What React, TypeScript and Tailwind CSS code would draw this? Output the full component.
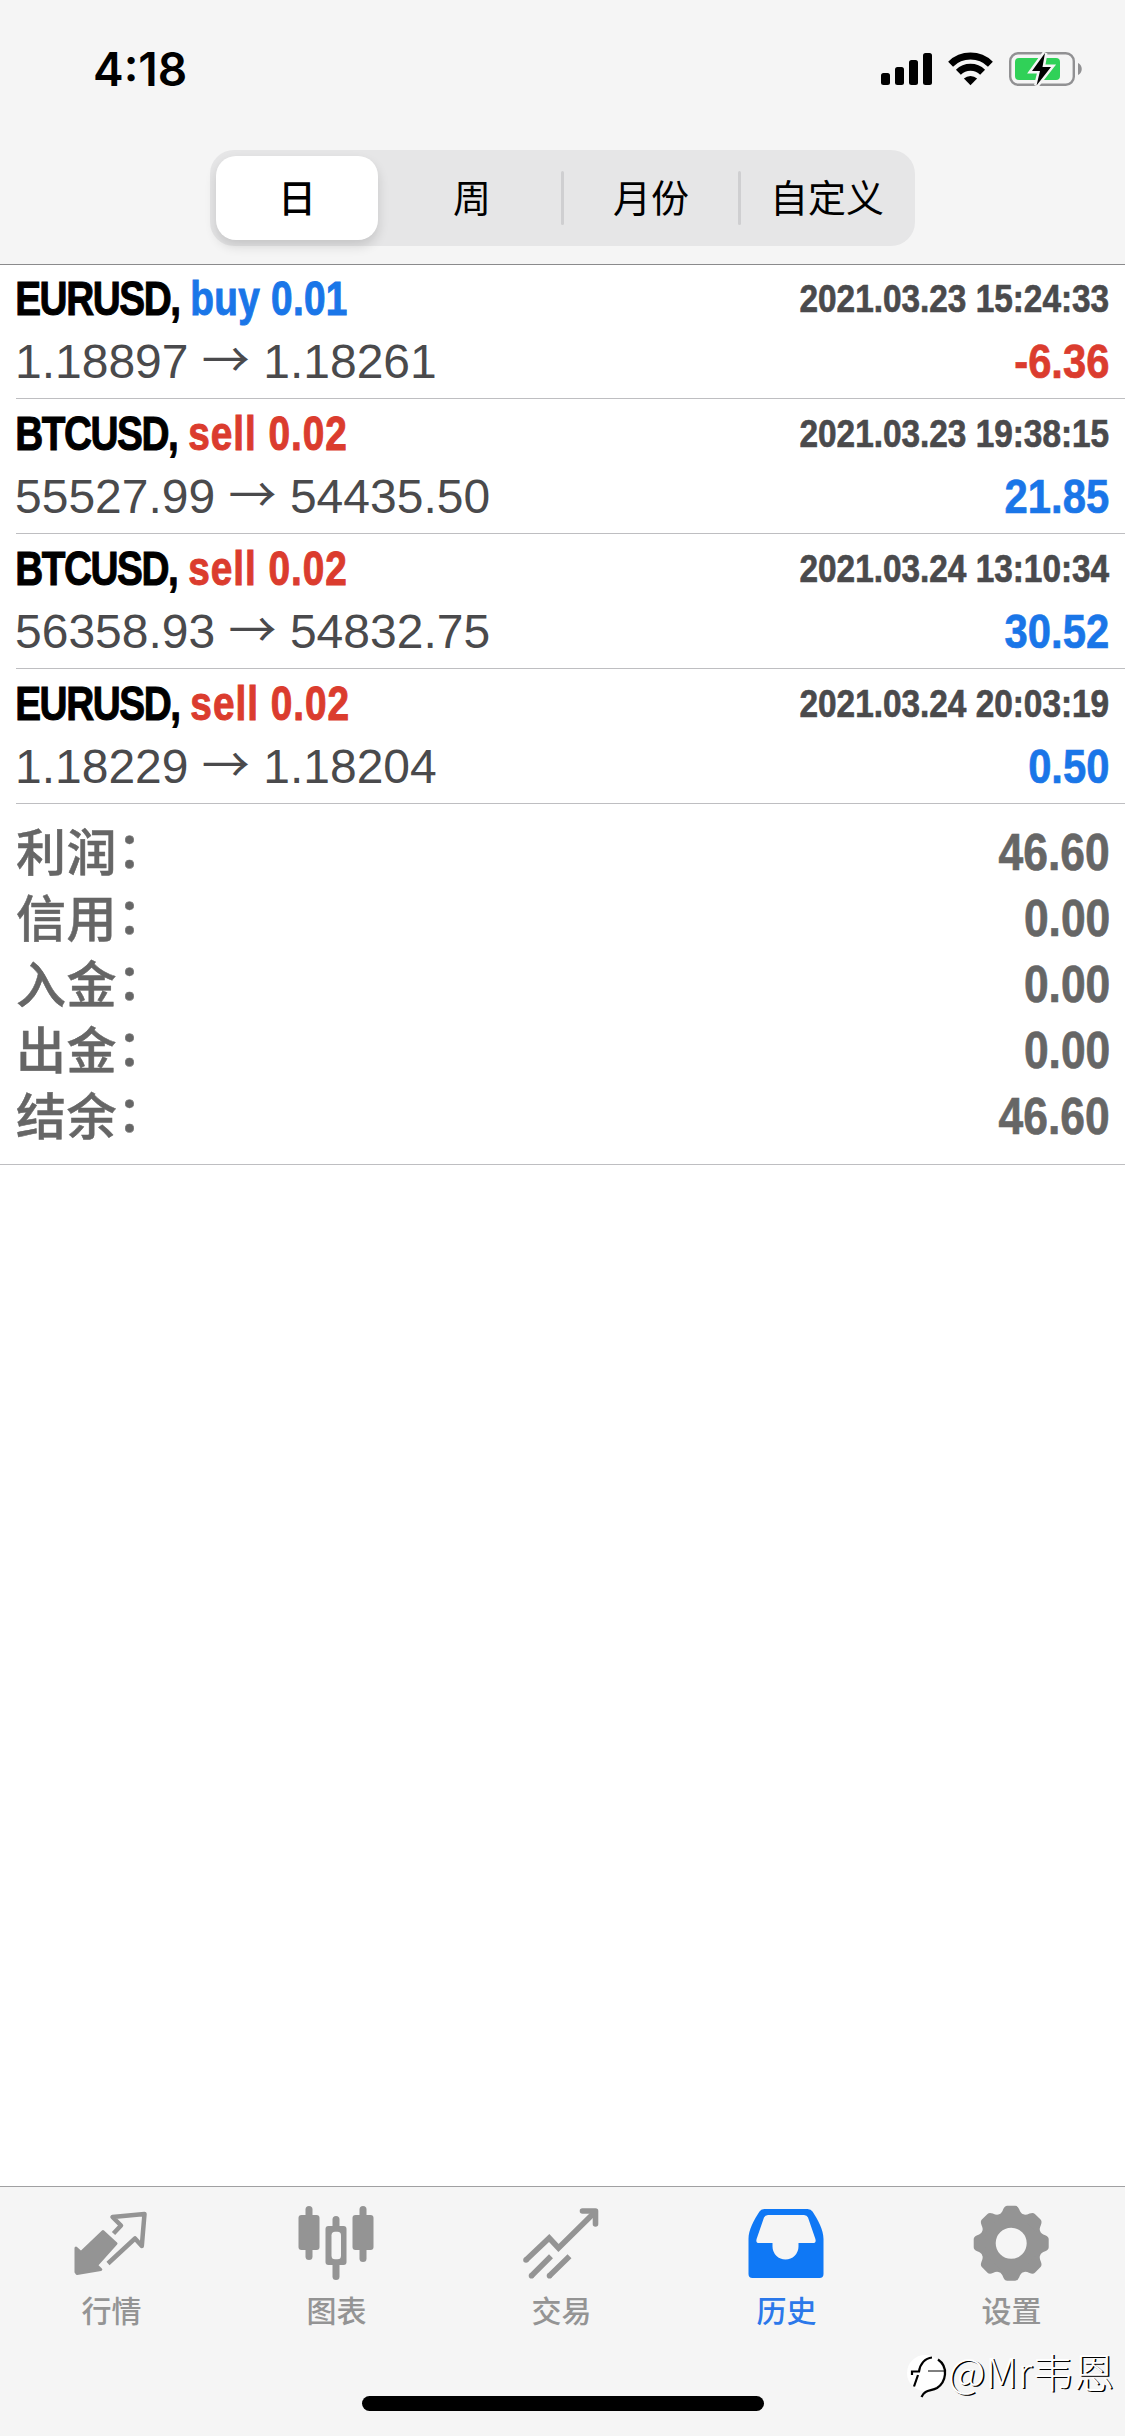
import React from 'react';

type Deal = {
  symbol: string;
  side: 'buy' | 'sell';
  lots: string;
  open: string;
  close: string;
  time: string;
  profit: string;
};

const deals: Deal[] = [
  { symbol: 'EURUSD', side: 'buy', lots: '0.01', open: '1.18897', close: '1.18261', time: '2021.03.23 15:24:33', profit: '-6.36' },
  { symbol: 'BTCUSD', side: 'sell', lots: '0.02', open: '55527.99', close: '54435.50', time: '2021.03.23 19:38:15', profit: '21.85' },
  { symbol: 'BTCUSD', side: 'sell', lots: '0.02', open: '56358.93', close: '54832.75', time: '2021.03.24 13:10:34', profit: '30.52' },
  { symbol: 'EURUSD', side: 'sell', lots: '0.02', open: '1.18229', close: '1.18204', time: '2021.03.24 20:03:19', profit: '0.50' },
];

const totals = [
  { label: '利润', value: '46.60' },
  { label: '信用', value: '0.00' },
  { label: '入金', value: '0.00' },
  { label: '出金', value: '0.00' },
  { label: '结余', value: '46.60' },
];

const periods = [
  { name: '日', width: 'w-[162px]' },
  { name: '周', width: 'ml-[5px] w-[178px]' },
  { name: '月份', width: 'w-[174px]' },
  { name: '自定义', width: 'w-[172px]' },
];

const sideStyles = {
  buy: 'tracking-[0.3px] text-[#1a76e8]',
  sell: 'tracking-[1.2px] text-[#db3c2e]',
};

const StatusBar = () => (
  <div className="flex h-[138px] items-center justify-between pl-[93px] pr-[42px]">
    <span className="font-['Inter'] text-[46px] leading-none font-semibold text-black">4:18</span>
    <div className="flex items-center gap-4">
      <svg width="51" height="34" viewBox="0 0 51 34" fill="#000">
        <rect x="0" y="21" width="9" height="12" rx="2.5" />
        <rect x="14" y="15" width="9" height="18" rx="2.5" />
        <rect x="28" y="8" width="9" height="25" rx="2.5" />
        <rect x="42" y="1" width="9" height="32" rx="2.5" />
      </svg>
      <svg width="45" height="34" viewBox="0 0 45 34" fill="none" stroke="#000" strokeWidth="7">
        <path d="M2.6 12.2a28.5 28.5 0 0 1 39.8 0" />
        <path d="M10.4 20.2a17.3 17.3 0 0 1 24.2 0" />
        <path d="M22.5 33.2l-6.6-6.6a9.4 9.4 0 0 1 13.2 0z" fill="#000" stroke="none" />
      </svg>
      <svg width="74" height="34" viewBox="0 0 74 34">
        <rect x="1.2" y="1.2" width="63.6" height="31.6" rx="8" fill="none" stroke="#919193" strokeWidth="2.4" />
        <path d="M69 11c5 2 5 10 0 12z" fill="#919193" />
        <rect x="6" y="6" width="45" height="22" rx="4" fill="#30d158" />
        <path d="M36 1 23 19H31L27.500 33.500 42 15H33.500z" fill="#000" stroke="#f5f5f5" strokeWidth="5" paintOrder="stroke" />
      </svg>
    </div>
  </div>
);

const PeriodSwitch = () => (
  <div className="mt-3 ml-[210px] flex h-[96px] w-[705px] items-center rounded-[24px] bg-[#e6e6e7] py-[6px] pl-[6px]">
    {periods.map(({ name, width }, i) => (
      <React.Fragment key={name}>
        {i > 1 && <span className="h-[54px] w-[3px] shrink-0 rounded-full bg-[#cfcfd1]" />}
        <button
          className={`flex h-full shrink-0 items-center justify-center pt-[2px] text-[38px] leading-none text-black ${width} ${
            i === 0 ? 'rounded-[20px] bg-white font-medium shadow-[0_6px_12px_rgba(0,0,0,0.14)]' : ''
          }`}
        >
          {name}
        </button>
      </React.Fragment>
    ))}
  </div>
);

// Condensed bold numbers, aligned to the right edge
const Amount = ({ value, className }: { value: string; className: string }) => (
  <span className={`origin-right leading-none font-bold [-webkit-text-stroke:0.7px_currentColor] ${className}`}>{value}</span>
);

const DealRow = ({ deal }: { deal: Deal }) => (
  <div className="ml-4 h-[135px] border-b border-[#bebec1] pr-4 pt-[6px]">
    <div className="flex h-[56px] items-center justify-between font-bold">
      <div className="origin-left scale-x-[0.808] pt-px text-[48px] leading-none whitespace-pre text-black [-webkit-text-stroke:1px_currentColor]">
        <span className="-ml-px tracking-[-1.8px]">{deal.symbol},</span>{' '}
        <span className={sideStyles[deal.side]}>
          {deal.side} {deal.lots}
        </span>
      </div>
      <Amount value={deal.time} className="scale-x-[0.855] text-[39px] text-[#4a4a4c]" />
    </div>
    <div className="flex h-[70px] items-center justify-between">
      <div className="-mt-1 -ml-px text-[48px] leading-none whitespace-pre text-[#4a4a4c]">
        {deal.open} <span className="inline-block -translate-y-[1px] font-['Noto_Sans_CJK_SC'] leading-none">→</span> {deal.close}
      </div>
      <Amount
        value={deal.profit}
        className={`scale-x-[0.87] pt-px text-[48px] ${deal.profit.startsWith('-') ? 'text-[#db3c2e]' : 'text-[#1a76e8]'}`}
      />
    </div>
  </div>
);

const QuotesIcon = () => (
  <svg width="84" height="80" viewBox="0 0 84 80" fill="#949494" stroke="#949494" strokeLinejoin="round">
    <path d="M6 46 11 50.500 33 29.500 46 41.500 26.500 63.300 30.800 67.500 7 71.500 6 70z" strokeWidth="3" />
    <path d="M43.500 31.500 51 23.500 42.500 15 74.500 12 71.800 44 65 36.500 38 61.500" fill="none" strokeWidth="4.500" />
  </svg>
);

const ChartIcon = () => (
  <svg width="84" height="80" viewBox="0 0 84 80" fill="#949494">
    <rect x="3.500" y="13" width="21" height="35" rx="3" />
    <rect x="10.500" y="4" width="7" height="54" rx="3.500" />
    <rect x="57.500" y="13" width="21" height="35" rx="3" />
    <rect x="64.500" y="4" width="7" height="56" rx="3.500" />
    <rect x="37.500" y="14" width="7" height="64" rx="3.500" />
    <rect x="30.500" y="24" width="21" height="39" rx="3" />
    <rect x="36.500" y="29.700" width="9.500" height="27.500" rx="3.500" fill="#f5f5f5" />
  </svg>
);

const TradeIcon = () => (
  <svg width="84" height="80" viewBox="0 0 84 80" fill="none" stroke="#949494" strokeWidth="5.600">
    <path d="M6 58 29.200 36 38.500 46 75 10" strokeLinejoin="miter" />
    <path d="M62.500 9H75.500V22" strokeLinecap="round" strokeLinejoin="round" />
    <path d="M11.500 73.700 31 54.300M29.500 73.700 49.500 54.300" />
    <g fill="#949494" stroke="none">
      <circle cx="6" cy="58" r="2.800" />
      <circle cx="11.500" cy="73.700" r="2.800" />
      <circle cx="29.500" cy="73.700" r="2.800" />
    </g>
  </svg>
);

const HistoryIcon = () => (
  <svg width="84" height="80" viewBox="0 0 84 80" fill="#0f78f5" fillRule="evenodd">
    <path d="M19.500 7H62.500Q66 7 67.500 9.500C73 18 78.500 28 78.500 37V72Q78.500 76 74.500 76H7.500Q3.500 76 3.500 72V37C3.500 28 9 18 14.500 9.500Q16 7 19.500 7ZM23 13Q20 13 19 15.500L11.600 37Q10.500 41 14 41H27.500V44.500A13 13 0 0 0 53.500 44.500V41H68Q71.500 41 70.400 37L63 15.500Q62 13 59 13Z" />
  </svg>
);

const SettingsIcon = () => (
  <svg width="84" height="80" viewBox="0 0 84 80" fill="#949494">
    <circle cx="41.200" cy="41.300" r="23" fill="none" stroke="#949494" strokeWidth="15" />
    {[0, 45, 90, 135, 180, 225, 270, 315].map((deg) => (
      <path
        key={deg}
        transform={`translate(41.2 41.3) rotate(${deg})`}
        d="M-13-26-12-29Q-9.500-29.800-8-34-6.500-37.500-4-37.500H4Q6.500-37.500 8-34 9.500-29.800 12-29L13-26Z"
      />
    ))}
  </svg>
);

const tabs = [
  { label: '行情', Icon: QuotesIcon },
  { label: '图表', Icon: ChartIcon },
  { label: '交易', Icon: TradeIcon },
  { label: '历史', Icon: HistoryIcon, active: true },
  { label: '设置', Icon: SettingsIcon },
];

const Watermark = () => (
  <div className="absolute top-[2348px] left-[905px] flex h-[52px] items-center text-white">
    <svg width="43" height="52" viewBox="0 0 43 52" fill="none" stroke="#000" strokeWidth="2.200">
      <circle cx="20" cy="25" r="18" fill="#fff" stroke="none" />
      <path d="M7 27V23.500H14C15 16 20 10 27 9.500M13 27 9 38.500" />
      <path d="M23 23H41" strokeWidth="1" />
      <path d="M33 11.500C44 19 41 34 32 40 26 43.500 20 41 16.500 49" />
    </svg>
    <span className="mb-[7px] font-['Noto_Sans_CJK_SC'] text-[41px] leading-none font-light whitespace-nowrap [text-shadow:1.5px_1px_0.5px_#000]">
      @Mr韦恩
    </span>
  </div>
);

export default function App() {
  return (
    <div className="relative flex h-[2436px] w-[1125px] flex-col overflow-hidden bg-white font-['Liberation_Sans','Noto_Sans_CJK_SC',sans-serif]">
      <header className="h-[265px] shrink-0 border-b border-[#8a8a8c] bg-[#f5f5f5]">
        <StatusBar />
        <PeriodSwitch />
      </header>

      <main className="-mt-px flex-1">
        {deals.map((deal) => (
          <DealRow key={deal.time} deal={deal} />
        ))}
        <div className="h-[361px] border-b border-[#bebec1] px-4 pt-[15px] text-[#666]">
          {totals.map(({ label, value }) => (
            <div key={label} className="flex h-[66px] items-center justify-between">
              <span className="flex pb-[7px] font-['Noto_Sans_CJK_SC'] text-[50px] leading-none font-medium tracking-[0.5px] [-webkit-text-stroke:0.5px_currentColor]">
                {label}
                <span className="-translate-y-[3px]">：</span>
              </span>
              <Amount value={value} className="translate-x-px scale-x-[0.87] text-[51px]" />
            </div>
          ))}
        </div>
      </main>

      <nav className="flex h-[250px] shrink-0 flex-col justify-between border-t border-[#a0a0a2] bg-[#f5f5f5] pb-[25px]">
        <div className="mr-px -ml-px flex pt-[15px]">
          {tabs.map(({ label, Icon, active }) => (
            <div key={label} className={`flex flex-1 flex-col items-center gap-[15px] ${active ? 'text-[#2b78ea]' : 'text-[#949494]'}`}>
              <Icon />
              <span className="text-[30px] leading-none font-medium">{label}</span>
            </div>
          ))}
        </div>
        <div className="mx-auto h-[15px] w-[402px] rounded-full bg-black" />
      </nav>

      <Watermark />
    </div>
  );
}
